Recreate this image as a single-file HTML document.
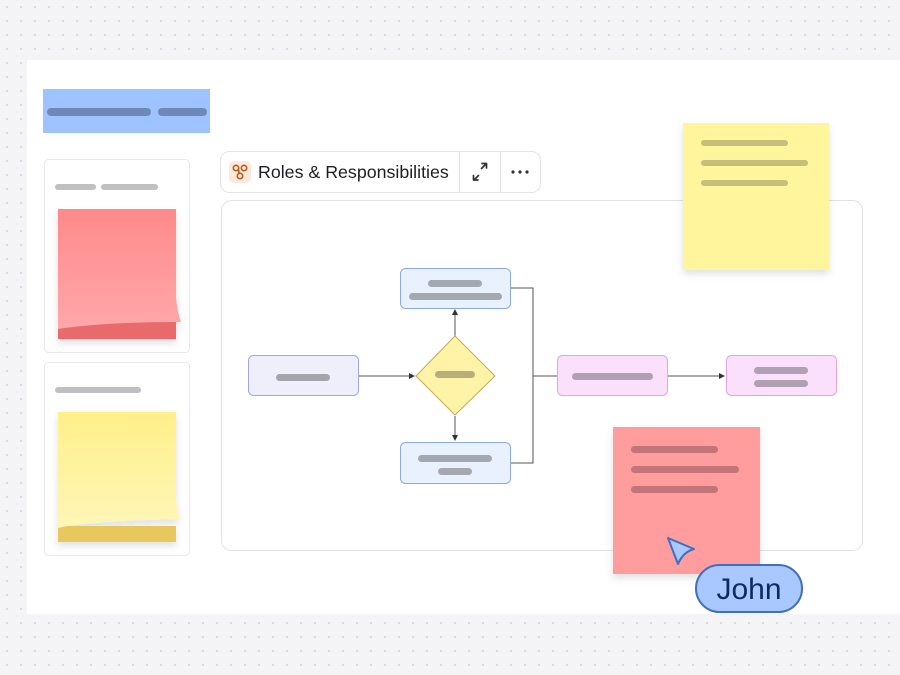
<!DOCTYPE html>
<html><head><meta charset="utf-8"><style>
html,body{margin:0;padding:0;width:900px;height:675px;overflow:hidden;background:#f4f4f6;font-family:"Liberation Sans",sans-serif}
</style></head><body>
<svg width="900" height="675" viewBox="0 0 900 675" xmlns="http://www.w3.org/2000/svg" style="position:absolute;left:0;top:0">
<defs>
<pattern id="dots" width="14" height="14" patternUnits="userSpaceOnUse"><circle cx="7" cy="7" r="1" fill="#cfcfd6"/></pattern>
<linearGradient id="rg" x1="0" y1="0" x2="0" y2="1"><stop offset="0" stop-color="#ff8a8a"/><stop offset="1" stop-color="#ffa7aa"/></linearGradient>
<linearGradient id="yg" x1="0" y1="0" x2="0" y2="1"><stop offset="0" stop-color="#fff08a"/><stop offset="1" stop-color="#fff6b8"/></linearGradient>
<filter id="sh" x="-20%" y="-20%" width="140%" height="150%"><feDropShadow dx="0" dy="4" stdDeviation="4" flood-color="#000" flood-opacity="0.12"/></filter>
<marker id="ar" markerWidth="6" markerHeight="6" refX="5" refY="3" orient="auto"><path d="M0,0 L6,3 L0,6z" fill="#333"/></marker>
</defs>
<rect width="900" height="675" fill="url(#dots)"/>
<rect x="27" y="60" width="873" height="554" fill="#fff"/>
<rect x="43" y="89" width="167" height="44" fill="#9ec3ff"/>
<rect x="47" y="108" width="104" height="8" rx="4" fill="#6b8ab8"/>
<rect x="158" y="108" width="49" height="8" rx="4" fill="#6b8ab8"/>
<rect x="44.5" y="159.5" width="145" height="193" rx="4" fill="#fff" stroke="#e8e8ec"/>
<rect x="55" y="184" width="41" height="6" rx="3" fill="#c0c0c4"/>
<rect x="101" y="184" width="57" height="6" rx="3" fill="#c0c0c4"/>
<g filter="url(#sh)">
<rect x="58" y="320" width="118" height="19" fill="#e86a6a"/>
<path d="M58,209 H176 V296 Q177,312 181,322 Q130,322 94,325 Q70,327 58,329 Z" fill="url(#rg)"/>
</g>
<rect x="44.5" y="362.5" width="145" height="193" rx="4" fill="#fff" stroke="#e8e8ec"/>
<rect x="55" y="387" width="86" height="6" rx="3" fill="#c0c0c4"/>
<g filter="url(#sh)">
<rect x="58" y="526" width="118" height="16" fill="#e6c85e"/>
<path d="M58,412 H176 V498 Q177,512 180,519 Q130,520 94,523 Q70,525 58,528 Z" fill="url(#yg)"/>
</g>
<rect x="220.5" y="151.5" width="320" height="41" rx="9" fill="#fff" stroke="#e4e4e8"/>
<line x1="459.5" y1="152" x2="459.5" y2="192" stroke="#e4e4e8"/>
<line x1="500.5" y1="152" x2="500.5" y2="192" stroke="#e4e4e8"/>
<rect x="229" y="161" width="22" height="22" rx="5" fill="#fde9dc"/>
<g fill="none" stroke="#b35a1f" stroke-width="1.6"><circle cx="236" cy="168" r="2.7"/><circle cx="244" cy="168" r="2.7"/><circle cx="240" cy="176" r="2.7"/><path d="M238.5,169.5 L239,173.5"/></g>
<text x="258" y="178" font-size="17.8" fill="#1e1e22">Roles &amp; Responsibilities</text>
<g stroke="#333" stroke-width="1.7" fill="none" stroke-linecap="round" stroke-linejoin="round"><path d="M481.5,168.5 L486,164 M482,163.5 H486.5 V168"/><path d="M478.5,175.5 L474,180 M473.5,175.5 V180 H478"/></g>
<circle cx="513" cy="172" r="1.6" fill="#333"/><circle cx="520" cy="172" r="1.6" fill="#333"/><circle cx="527" cy="172" r="1.6" fill="#333"/>
<rect x="221.5" y="200.5" width="641" height="350" rx="10" fill="#fff" stroke="#e2e2e6"/>
<g stroke="#555" stroke-width="1" fill="none">
<line x1="358" y1="376" x2="414" y2="376" marker-end="url(#ar)"/>
<line x1="455" y1="336" x2="455" y2="310" marker-end="url(#ar)"/>
<line x1="455" y1="416" x2="455" y2="440" marker-end="url(#ar)"/>
<path d="M510,288 H533 V463 H510"/>
<line x1="533" y1="376" x2="557" y2="376"/>
<line x1="667" y1="376" x2="724" y2="376" marker-end="url(#ar)"/>
</g>
<rect x="248.5" y="355.5" width="110" height="40" rx="5" fill="#efeefb" stroke="#a9a4e0"/>
<rect x="276" y="374" width="54" height="7" rx="3.5" fill="#a4a4ac"/>
<rect x="400.5" y="268.5" width="110" height="40" rx="5" fill="#e9f1ff" stroke="#8cabe4"/>
<rect x="428" y="280" width="54" height="7" rx="3.5" fill="#a4a8b0"/>
<rect x="409" y="293" width="93" height="7" rx="3.5" fill="#a4a8b0"/>
<rect x="400.5" y="442.5" width="110" height="41" rx="5" fill="#e9f1ff" stroke="#8cabe4"/>
<rect x="418" y="455" width="74" height="7" rx="3.5" fill="#a4a8b0"/>
<rect x="438" y="468" width="34" height="7" rx="3.5" fill="#a4a8b0"/>
<path d="M455,336 L495,376 L455,415 L416,376 Z" fill="#fff3a8" stroke="#c4a85a"/>
<rect x="435" y="371" width="40" height="7" rx="3.5" fill="#b8ae7a"/>
<rect x="557.5" y="355.5" width="110" height="40" rx="5" fill="#fbe0fc" stroke="#e2a4ea"/>
<rect x="572" y="373" width="81" height="7" rx="3.5" fill="#b0a0b4"/>
<rect x="726.5" y="355.5" width="110" height="40" rx="5" fill="#fbe0fc" stroke="#e2a4ea"/>
<rect x="754" y="367" width="54" height="7" rx="3.5" fill="#b0a0b4"/>
<rect x="754" y="380" width="54" height="7" rx="3.5" fill="#b0a0b4"/>
<rect x="683" y="123" width="146" height="147" fill="#fff59d" filter="url(#sh)"/>
<rect x="701" y="140" width="87" height="6" rx="3" fill="#c6bf7a"/>
<rect x="701" y="160" width="107" height="6" rx="3" fill="#c6bf7a"/>
<rect x="701" y="180" width="87" height="6" rx="3" fill="#c6bf7a"/>
<rect x="613" y="427" width="147" height="147" fill="#ff9c9e" filter="url(#sh)"/>
<rect x="631" y="446" width="87" height="7" rx="3.5" fill="#c27478"/>
<rect x="631" y="466" width="108" height="7" rx="3.5" fill="#c27478"/>
<rect x="631" y="486" width="87" height="7" rx="3.5" fill="#c27478"/>
<path d="M668,538 L694,549 Q683,552 678,564 Z" fill="#a9c8ff" stroke="#3f6fc2" stroke-width="2" stroke-linejoin="round"/>
<rect x="696" y="565" width="106" height="47" rx="23.5" fill="#a9c8ff" stroke="#3f6fc2" stroke-width="2"/>
<text x="749" y="599" font-size="30" fill="#0e2a66" text-anchor="middle">John</text>
</svg>
</body></html>
